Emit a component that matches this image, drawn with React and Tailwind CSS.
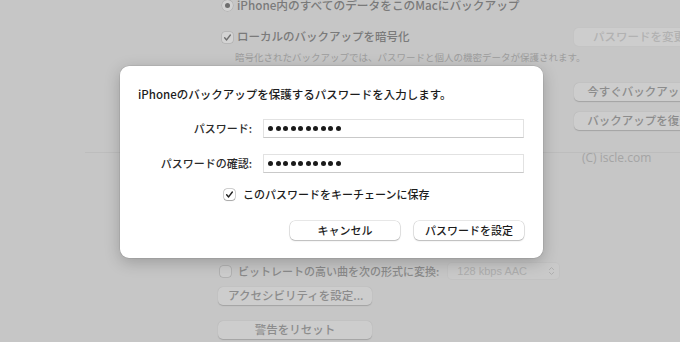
const jp = { fontFamily: '"Noto Sans CJK JP", "Noto Sans", sans-serif' };

const Dots = ({ count = 10 }) => (
  <span className="flex items-center gap-[2.5px]">
    {Array.from({ length: count }).map((_, i) => (
      <span key={i} className="h-[5px] w-[5px] rounded-full bg-[#1a1a1a]" />
    ))}
  </span>
);

const Check = ({ className = "h-[9px] w-[9px]", color = "#222" }) => (
  <svg viewBox="0 0 12 12" fill="none" className={className} aria-hidden="true">
    <path d="M2.2 6.4 4.8 9.2 9.8 2.6" stroke={color} strokeWidth="1.9" strokeLinecap="round" strokeLinejoin="round" />
  </svg>
);

const GhostButton = ({ children, className = "" }) => (
  <div className={`flex h-[18px] shrink-0 items-center justify-center rounded-[5px] bg-[#cdcdcd] text-[11.5px] font-medium text-[#8c8c8c] shadow-[0_0.5px_1px_rgba(0,0,0,0.18)] ${className}`}>
    {children}
  </div>
);

const PasswordRow = ({ label }) => (
  <div className="flex h-[19px] items-center">
    <span className="w-[134px] pr-[2px] text-right text-[11px] font-medium text-[#2a2a2a]">{label}</span>
    <div className="ml-[9px] flex h-[19px] w-[261px] items-center border border-[#e2e2e2] border-b-[#c9c9c9] bg-white pl-[4px]">
      <Dots />
    </div>
  </div>
);

export default function App() {
  return (
    <div className="relative h-[342px] w-[680px] overflow-hidden bg-[#c6c6c6]" style={jp}>
      {/* background preferences pane (dimmed) */}
      <div className="flex flex-col">
        <div className="-mt-[3px] flex h-4 items-center pl-[222px]">
          <span className="grid h-[11px] w-[11px] place-items-center rounded-full bg-[#d3d3d3] shadow-[0_0_0_0.5px_rgba(0,0,0,0.15)]">
            <span className="h-[5px] w-[5px] rounded-full bg-[#6e6e6e]" />
          </span>
          <span className="ml-[4px] whitespace-nowrap text-[11.7px] font-medium text-[#7a7a7a]">iPhone内のすべてのデータをこのMacにバックアップ</span>
        </div>

        <div className="mt-[15px] flex h-[18px] items-center">
          <div className="flex w-[574px] shrink-0 items-center pl-[222px]">
            <span className="grid h-[11px] w-[11px] place-items-center rounded-[3px] bg-[#d3d3d3] shadow-[0_0_0_0.5px_rgba(0,0,0,0.15)]">
              <Check className="h-[9px] w-[9px]" color="#6e6e6e" />
            </span>
            <span className="ml-[4px] text-[11.5px] font-medium text-[#7a7a7a]">ローカルのバックアップを暗号化</span>
          </div>
          <GhostButton className="w-[130px] text-[#b2b2b2] shadow-none ring-1 ring-[#c0c0c0]/40">パスワードを変更</GhostButton>
        </div>

        <div className="mt-[4px] h-[14px] whitespace-nowrap pl-[235px] text-[9.5px] leading-[14px] text-[#9d9d9d]">
          暗号化されたバックアップでは、パスワードと個人の機密データが保護されます。
        </div>

        <div className="mt-[19px] flex flex-col gap-[11px] pl-[574px]">
          <GhostButton className="w-[130px]">今すぐバックアップ</GhostButton>
          <GhostButton className="w-[130px]">バックアップを復元</GhostButton>
        </div>

        <div className="ml-[85px] mt-[22px] h-px bg-[#bdbdbd]" />
        <div className="h-[10px] pl-[582px] text-[12px] leading-[10px] text-[#a4a4a4]" style={{ fontFamily: '"Open Sans", sans-serif' }}>
          (C) iscle.com
        </div>

        <div className="mt-[100px] flex h-[16px] items-center pl-[220px]">
          <span className="h-[11px] w-[11px] rounded-[3px] bg-[#cdcdcd] shadow-[0_0_0_0.5px_rgba(0,0,0,0.2)]" />
          <span className="ml-[7px] text-[11px] font-medium text-[#8a8a8a]">ビットレートの高い曲を次の形式に変換:</span>
          <div className="ml-[9px] flex h-[16px] w-[111px] items-center justify-between rounded-[4px] bg-[#c9c9c9] pl-[9px] pr-[4px] text-[11px] text-[#adadad] ring-1 ring-[#c2c2c2]">
            <span style={{ fontFamily: '"Liberation Sans", sans-serif' }}>128 kbps AAC</span>
            <svg viewBox="0 0 10 14" className="h-[10px] w-[7px]" fill="none" aria-hidden="true">
              <path d="M2 5 5 2l3 3M2 9l3 3 3-3" stroke="#adadad" strokeWidth="1.4" strokeLinecap="round" strokeLinejoin="round" />
            </svg>
          </div>
        </div>

        <GhostButton className="ml-[218px] mt-[8px] w-[154px] justify-start pl-[10px]">アクセシビリティを設定...</GhostButton>
        <GhostButton className="ml-[218px] mt-[16px] w-[154px]">警告をリセット</GhostButton>
      </div>

      {/* dialog sheet */}
      <div className="absolute left-[120px] top-[66px] h-[192px] w-[423px] rounded-[9px] bg-white shadow-[0_4px_16px_rgba(0,0,0,0.22),0_0_0_0.5px_rgba(0,0,0,0.12)]">
        <div className="pl-[18px] pt-[20px] text-[11.5px] font-medium leading-[16px] text-[#1c1c1c]">
          iPhoneのバックアップを保護するパスワードを入力します。
        </div>
        <div className="mt-[17px] flex flex-col gap-[16px]">
          <PasswordRow label="パスワード:" />
          <PasswordRow label="パスワードの確認:" />
        </div>
        <div className="ml-[104px] mt-[14px] flex h-[14px] items-center">
          <span className="grid h-[11px] w-[11px] place-items-center rounded-[3px] bg-white shadow-[0_0_0_0.5px_rgba(0,0,0,0.35),0_0.5px_1px_rgba(0,0,0,0.2)]">
            <Check className="h-[9px] w-[9px]" />
          </span>
          <span className="ml-[8px] text-[11px] font-medium text-[#1c1c1c]">このパスワードをキーチェーンに保存</span>
        </div>
        <div className="ml-[170px] mt-[20px] flex gap-[14px]">
          <button type="button" className="flex h-[19px] w-[110px] items-center justify-center rounded-[5px] bg-white text-[11px] font-medium text-[#1c1c1c] shadow-[0_0_0_0.5px_rgba(0,0,0,0.18),0_1px_1.5px_rgba(0,0,0,0.2)]">
            キャンセル
          </button>
          <button type="button" className="flex h-[19px] w-[110px] items-center justify-center rounded-[5px] bg-white text-[11px] font-medium text-[#1c1c1c] shadow-[0_0_0_0.5px_rgba(0,0,0,0.18),0_1px_1.5px_rgba(0,0,0,0.2)]">
            パスワードを設定
          </button>
        </div>
      </div>
    </div>
  );
}
